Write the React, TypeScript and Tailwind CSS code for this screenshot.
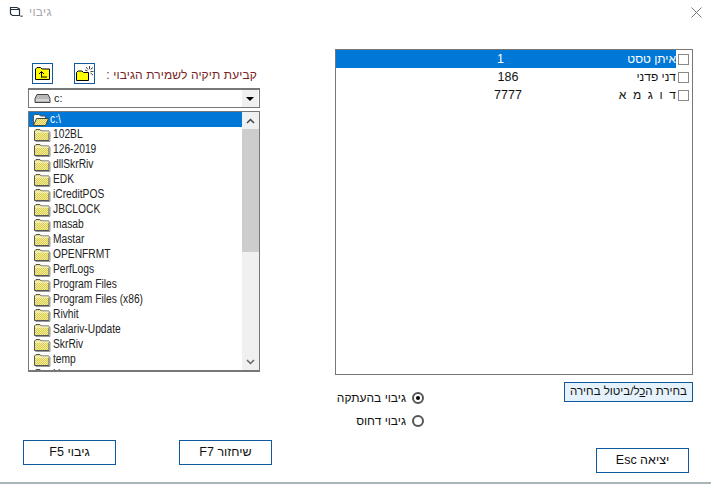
import React from "react";

const folders = [
  "102BL", "126-2019", "dllSkrRiv", "EDK", "iCreditPOS", "JBCLOCK", "masab", "Mastar", "OPENFRMT",
  "PerfLogs", "Program Files", "Program Files (x86)", "Rivhit", "Salariv-Update", "SkrRiv", "temp", "Usr",
];

const people = [
  { name: "איתן טסט", value: "1", pad: "pr-[15px]", active: true },
  { name: "דני פדני", value: "186", pad: "", active: false },
  { name: "ד\u00a0\u00a0ו\u00a0\u00a0ג\u00a0\u00a0מ\u00a0\u00a0א", value: "7777", pad: "", active: false },
];

function Folder({ open = false }: { open?: boolean }) {
  return (
    <svg width="17" height="14" viewBox="0 0 17 14" className="shrink-0">
      <defs>
        <pattern id="dots" width="2" height="2" patternUnits="userSpaceOnUse">
          <rect width="2" height="2" fill="#f4ee9c" />
          <rect width="1" height="1" fill="#d8cc50" />
          <rect x="1" y="1" width="1" height="1" fill="#d8cc50" />
        </pattern>
      </defs>
      {open ? (
        <>
          <path d="M1.5 11.5V2.5L3 1.5H7L8.5 3H13.5V5" fill="#fff" stroke="#555" />
          <path d="M1.5 12.5L4.5 5.5H16.5L13.5 12.5Z" fill="url(#dots)" stroke="#444" />
        </>
      ) : (
        <>
          <path d="M0.5 12.5V3L2 1.5H6L7.5 3H15V12.5Z" fill="url(#dots)" stroke="#555" />
          <path d="M1 4H15" stroke="#fffde0" />
          <path d="M16 4V13.5H1.5" stroke="#999" fill="none" />
        </>
      )}
    </svg>
  );
}

function ToolIcon({ spark = false }: { spark?: boolean }) {
  return (
    <button className="w-[21px] h-[21px] border border-[#0f5a9e] flex items-center justify-center bg-white">
      {spark ? (
        <svg width="19" height="17" viewBox="0 0 19 17">
          <path d="M1.5 15.5V7.5L3 6H7L8.5 7.5H13.5V15.5Z" fill="#ffff00" stroke="#000" />
          <path d="M14.5 1V4M18 2.5L15.5 4.5M18.5 6.5H15.5M18 10L15.5 8M11 2L13 4.5M10 5L12.5 6" stroke="#444" />
        </svg>
      ) : (
        <svg width="17" height="17" viewBox="0 0 17 17">
          <path d="M1.5 14.5V4L3 2.5H6.5L8 4H15.5V14.5Z" fill="#ffff00" stroke="#000" />
          <path d="M7.5 12.5V7M5 9L7.5 6.5L10 9M7.5 12H13" stroke="#000" fill="none" />
        </svg>
      )}
    </button>
  );
}

function Radio({ checked, label }: { checked?: boolean; label: string }) {
  return (
    <div className="flex items-center justify-end gap-[6px] h-[23px]">
      <span dir="rtl" className="text-[12px] text-[#111] whitespace-nowrap">{label}</span>
      <span className="shrink-0 w-[12px] h-[12px] rounded-full border-2 border-[#555] flex items-center justify-center bg-white">
        {checked && <span className="w-[4px] h-[4px] rounded-full bg-black" />}
      </span>
    </div>
  );
}

function ActionButton({ label }: { label: string }) {
  return (
    <button dir="rtl" className="w-[93px] h-[25px] border border-[#0f5a9e] bg-white text-[12.5px] text-[#111] flex items-center justify-center">
      {label}
    </button>
  );
}

export default function App() {
  return (
    <div className="w-[711px] h-[484px] bg-white flex flex-col border-b-2 border-[#a9b4b9] font-['Liberation_Sans',Arial,sans-serif] overflow-hidden">
      {/* title bar */}
      <div className="h-[30px] shrink-0 flex items-center justify-between pl-[9px] pr-[9px]">
        <div className="flex items-center gap-[6px] pb-[6px]">
          <svg width="14" height="12" viewBox="0 0 14 12">
            <path d="M1.5 1.5H8L10.5 3V9.5H3.5L1.5 8Z" fill="none" stroke="#22333f" strokeWidth="1.2" />
            <path d="M1.5 3.5H10" stroke="#22333f" />
            <path d="M11.5 9.5H13.5V11H11.5Z" fill="#555" />
          </svg>
          <span dir="rtl" className="text-[12px] text-[#a8a8a8] tracking-[0.3px]">גיבוי</span>
        </div>
        <svg width="11" height="11" viewBox="0 0 11 11" className="mb-[5px]">
          <path d="M0.5 0.5L10.5 10.5M10.5 0.5L0.5 10.5" stroke="#777" />
        </svg>
      </div>

      <div className="flex-1 flex justify-between pl-[23px] pr-[18px]">
        {/* left column */}
        <div className="w-[249px] flex flex-col pt-[33px] pb-[17px]">
          <div className="pl-[5px] w-[237px]">
            <div className="flex items-center h-[21px] pl-[4px] mb-[4px]">
              <ToolIcon />
              <span className="w-[21px]" />
              <ToolIcon spark />
              <span dir="rtl" className="flex-1 pt-[2px] pr-[3px] text-[12px] text-[#7a1f1f] tracking-[0.1px] whitespace-nowrap text-right">
                קביעת תיקיה לשמירת הגיבוי :
              </span>
            </div>
            <div className="h-[20px] border border-[#777] border-t-2 flex items-center justify-between bg-white">
              <div className="flex items-center gap-[3px] pl-[5px] text-[11px] text-[#222]">
                <svg width="17" height="11" viewBox="0 0 17 11">
                  <path d="M1 5.5L3 1.5H14L16 5.5V9.5H1Z" fill="#b8b8b8" stroke="#444" />
                  <path d="M2 7H15" stroke="#eee" />
                </svg>
                c:
              </div>
              <span className="w-[16px] h-[17px] mr-[1px] bg-[#f0f0f0] flex items-center justify-center">
                <span className="border-x-[4px] border-x-transparent border-t-[4px] border-t-black" />
              </span>
            </div>
            <div className="mt-[3px] h-[261px] border border-[#777] border-b-2 flex overflow-hidden">
              <div className="flex-1 min-w-0 text-[12.5px] text-[#222] overflow-hidden">
                <div className="h-[15px] bg-[#0078d7] text-white flex items-center gap-[1px] pl-[3px]">
                  <Folder open />
                  <span className="inline-block origin-left scale-x-[0.82]">c:\</span>
                </div>
                {folders.map((f) => (
                  <div key={f} className="h-[15px] flex items-center gap-[2px] pl-[5px] whitespace-nowrap">
                    <Folder />
                    <span className="inline-block origin-left scale-x-[0.82]">{f}</span>
                  </div>
                ))}
              </div>
              <div className="w-[17px] bg-[#f0f0f0] flex flex-col">
                <div className="h-[17px] flex items-center justify-center">
                  <svg width="9" height="6" viewBox="0 0 9 6">
                    <path d="M1 5L4.5 1.5L8 5" stroke="#444" strokeWidth="1.5" fill="none" />
                  </svg>
                </div>
                <div className="h-[123px] bg-[#cdcdcd]" />
                <div className="flex-1" />
                <div className="h-[17px] flex items-center justify-center">
                  <svg width="9" height="6" viewBox="0 0 9 6">
                    <path d="M1 1L4.5 4.5L8 1" stroke="#666" strokeWidth="1.5" fill="none" />
                  </svg>
                </div>
              </div>
            </div>
          </div>
          <div className="mt-auto flex justify-between">
            <ActionButton label="גיבוי F5" />
            <ActionButton label="שיחזור F7" />
          </div>
        </div>

        {/* right column */}
        <div className="w-[358px] flex flex-col pt-[19px] pb-[9px]">
          <div className="h-[326px] border border-[#777]">
            {people.map((p) => (
              <div key={p.name} className="h-[18px] flex items-center text-[#111]">
                <div className={`w-[340px] h-full grid items-center pb-[1px] ${p.active ? "bg-[#0078d7] text-white" : ""}`}>
                  <span className={`[grid-area:1/1] text-[12.5px] text-center pl-[4px] ${p.pad}`}>{p.value}</span>
                  <span dir="rtl" className="[grid-area:1/1] text-[12px] whitespace-nowrap">{p.name}</span>
                </div>
                <span className="ml-[2px] w-[11px] h-[11px] border border-[#8a8a8a] bg-white" />
              </div>
            ))}
          </div>
          <div className="flex justify-between pt-[7px]">
            <div className="w-[89px] pt-[4px]">
              <Radio checked label="גיבוי בהעתקה" />
              <Radio label="גיבוי דחוס" />
            </div>
            <button dir="rtl" className="w-[129px] h-[20px] border border-[#0f5a9e] bg-[#e5f1fb] text-[11.5px] text-[#111] flex items-center justify-center">
              <span>בחירת ה<u>כ</u>ל/ביטול בחירה</span>
            </button>
          </div>
          <div className="mt-auto flex justify-end pr-[4px]">
            <ActionButton label="יציאה Esc" />
          </div>
        </div>
      </div>
    </div>
  );
}
